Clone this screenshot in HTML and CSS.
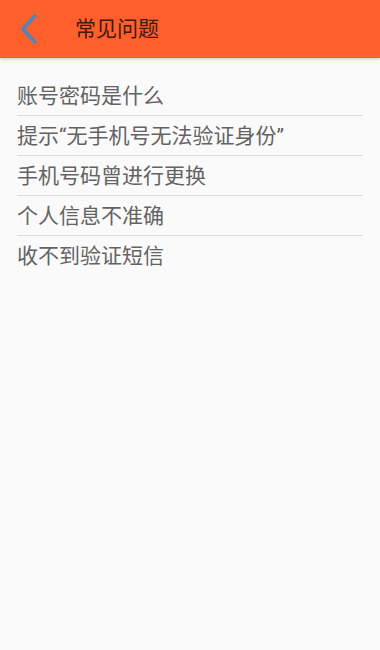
FILE: index.html
```html
<!DOCTYPE html>
<html lang="zh-CN">
<head>
<meta charset="utf-8">
<title>常见问题</title>
<link rel="stylesheet" href="styles.css">
</head>
<body>
<header class="topbar">
  <svg class="back" width="24" height="36" viewBox="0 0 24 36" aria-hidden="true">
    <polyline points="18,5 6,18 18,31" fill="none" stroke="#4f85b8" stroke-width="3.8" stroke-linecap="round" stroke-linejoin="round"/>
  </svg>
  <h1 class="title">常见问题</h1>
</header>
<ul class="faq">
  <li class="faq-item">账号密码是什么</li>
  <li class="faq-item">提示“无手机号无法验证身份”</li>
  <li class="faq-item">手机号码曾进行更换</li>
  <li class="faq-item">个人信息不准确</li>
  <li class="faq-item">收不到验证短信</li>
</ul>
</body>
</html>
```
FILE: styles.css
```css
html, body {
  margin: 0;
  padding: 0;
}
body {
  width: 380px;
  min-height: 650px;
  background: #fafafa;
  font-family: Roboto, "Noto Sans CJK SC", sans-serif;
}
.topbar {
  height: 58px;
  background: #fe5f2b;
  display: flex;
  align-items: center;
  box-shadow: 0 1px 3px rgba(0, 0, 0, 0.22);
}
.back {
  margin-left: 17px;
  flex: none;
}
.title {
  margin: 0 0 0 34px;
  font-size: 21px;
  font-weight: normal;
  color: #3a1c12;
  line-height: 1;
}
.faq {
  list-style: none;
  margin: 0;
  padding: 18px 17px 0 17px;
}
.faq-item {
  box-sizing: border-box;
  height: 40px;
  padding-top: 1px;
  line-height: 38px;
  font-size: 21px;
  color: #636363;
  border-bottom: 1px solid #dcdcdc;
  white-space: nowrap;
}
.faq-item:last-child {
  border-bottom: none;
}
```
